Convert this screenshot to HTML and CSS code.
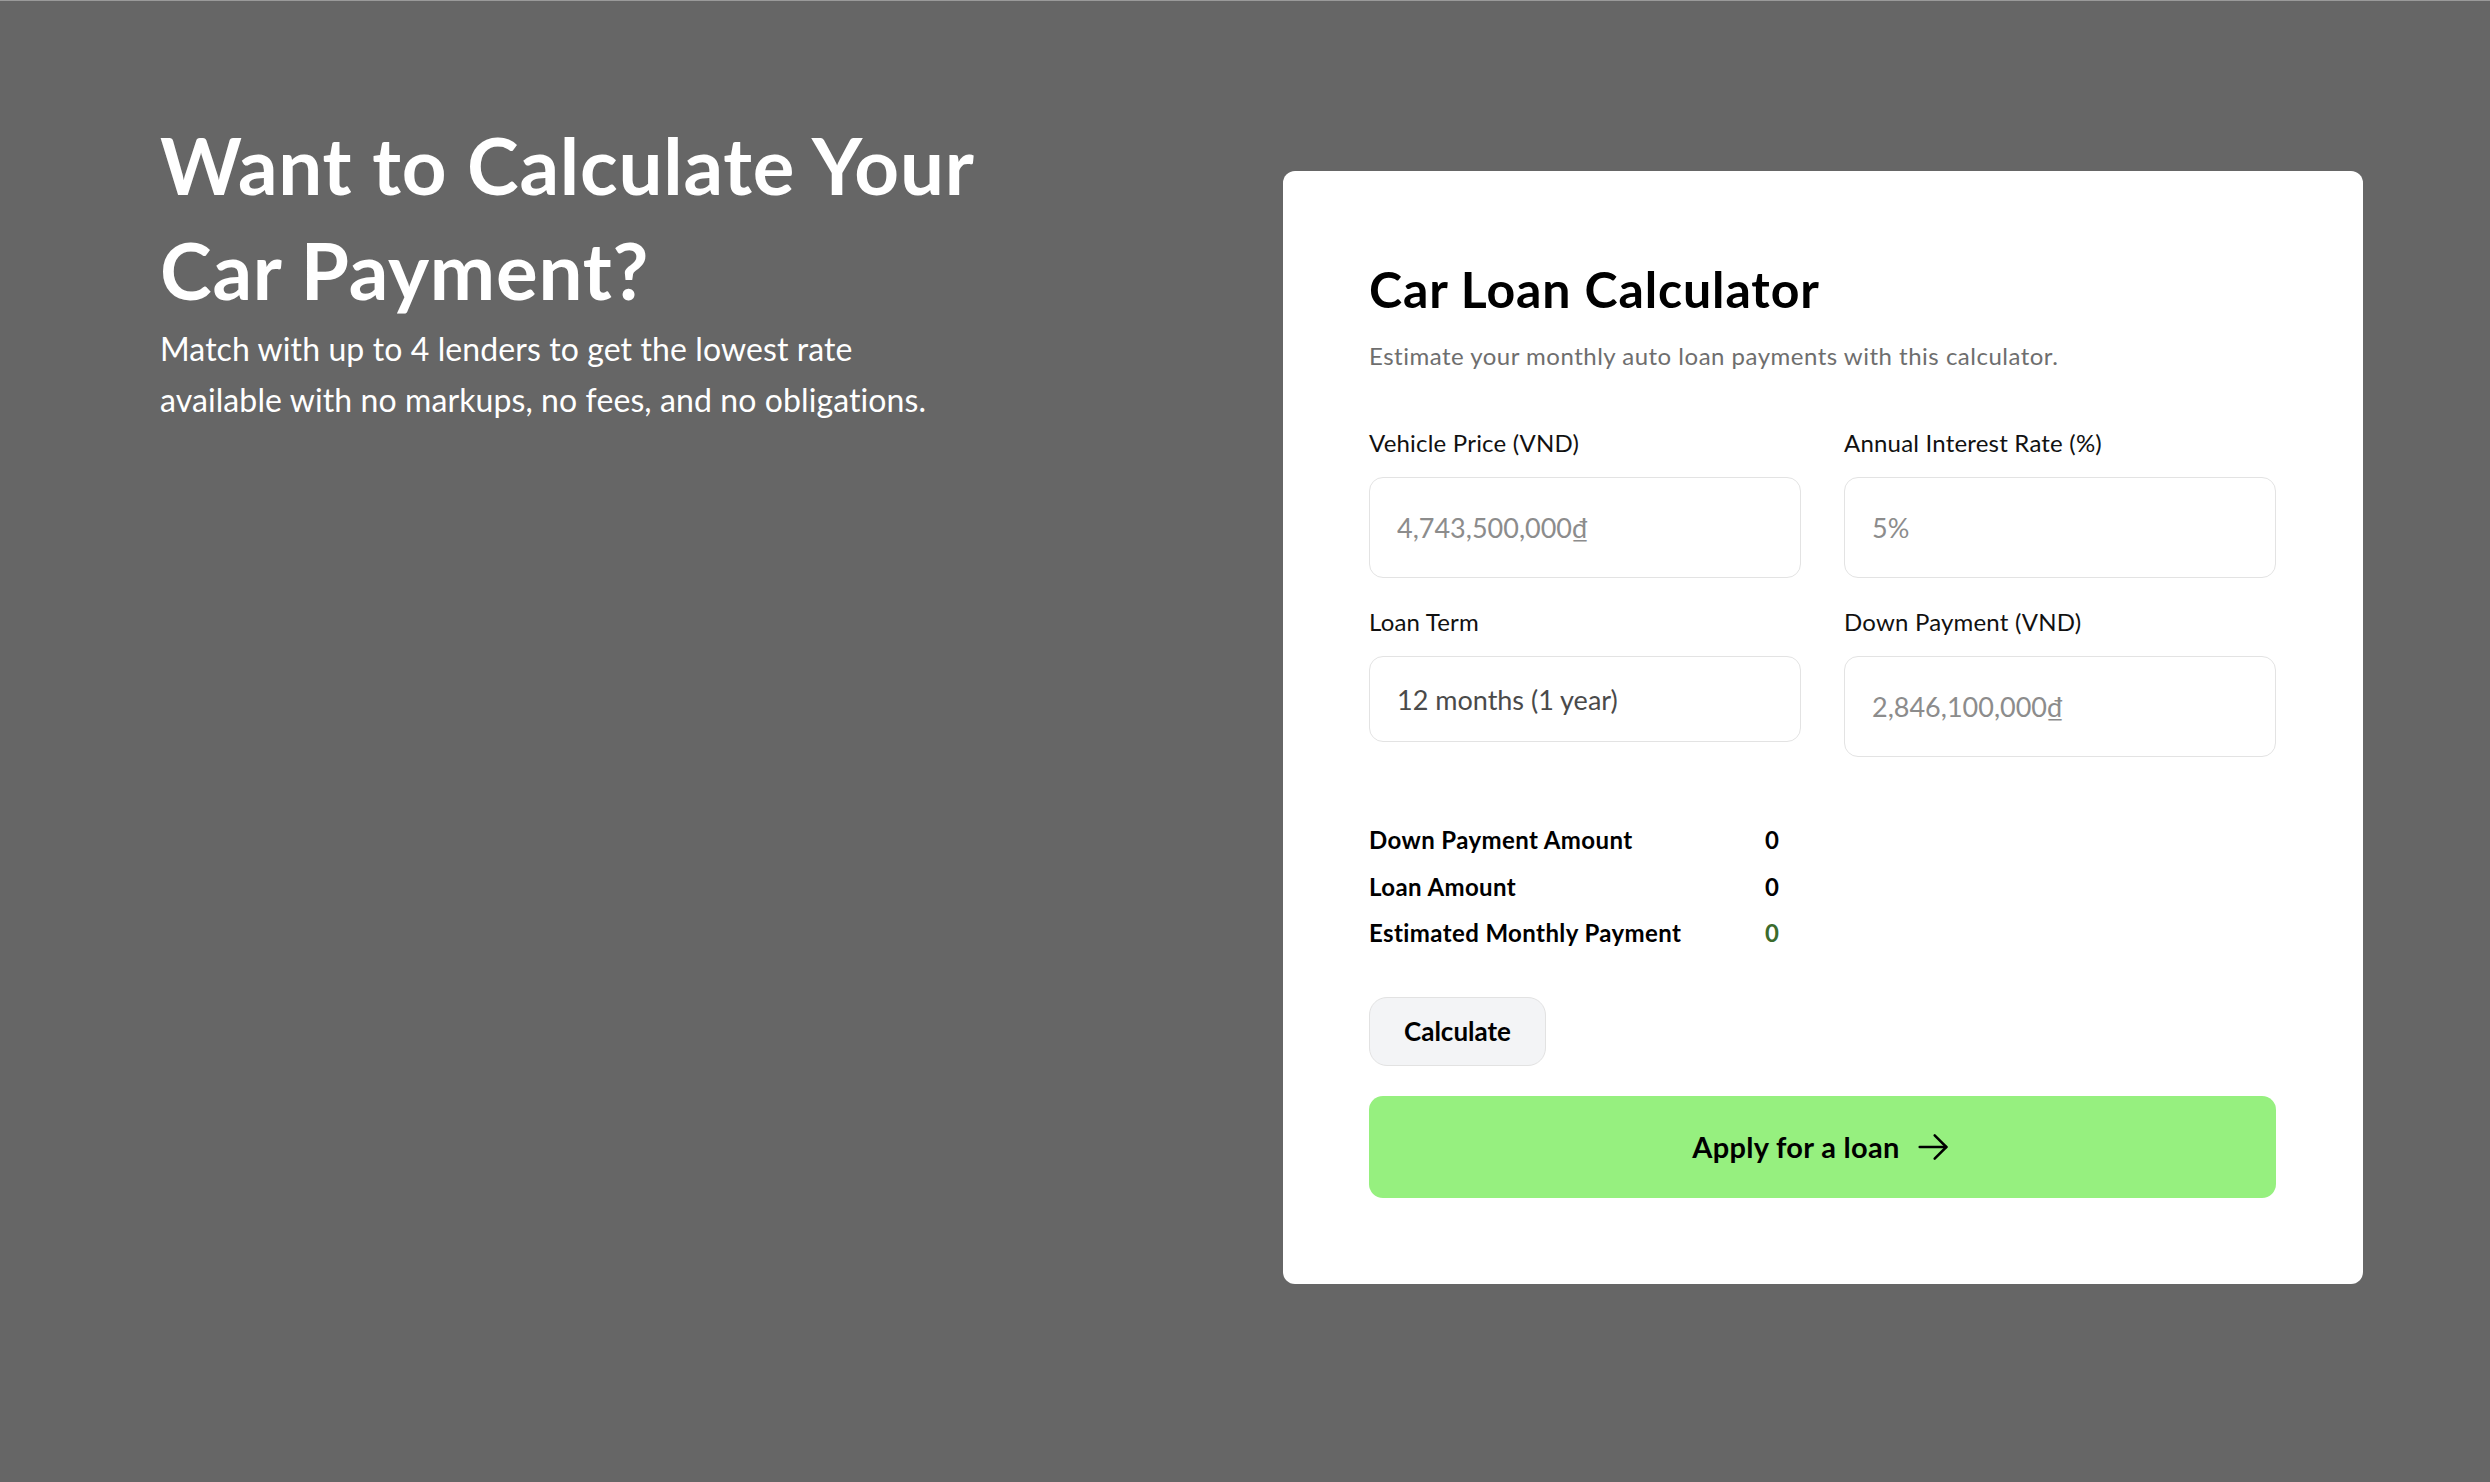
FILE: index.html
```html
<!DOCTYPE html>
<html lang="en">
<head>
<meta charset="utf-8">
<title>Car Loan Calculator</title>
<link rel="stylesheet" href="styles.css">
</head>
<body>
<main class="page">
  <section class="intro">
    <h1 class="intro-title">Want to Calculate Your Car Payment?</h1>
    <p class="intro-text">Match with up to 4 lenders to get the lowest rate available with no markups, no fees, and no obligations.</p>
  </section>
  <section class="card">
    <h2 class="card-title">Car Loan Calculator</h2>
    <p class="card-sub">Estimate your monthly auto loan payments with this calculator.</p>
    <div class="fields">
      <div class="field">
        <label class="field-label" for="price">Vehicle Price (VND)</label>
        <input class="field-input" id="price" type="text" placeholder="4,743,500,000₫">
      </div>
      <div class="field">
        <label class="field-label" for="rate">Annual Interest Rate (%)</label>
        <input class="field-input" id="rate" type="text" placeholder="5%">
      </div>
      <div class="field">
        <label class="field-label" for="term">Loan Term</label>
        <select class="field-select" id="term">
          <option>12 months (1 year)</option>
          <option>24 months (2 years)</option>
          <option>36 months (3 years)</option>
        </select>
      </div>
      <div class="field">
        <label class="field-label" for="down">Down Payment (VND)</label>
        <input class="field-input" id="down" type="text" placeholder="2,846,100,000₫">
      </div>
    </div>
    <dl class="results">
      <dt>Down Payment Amount</dt><dd>0</dd>
      <dt>Loan Amount</dt><dd>0</dd>
      <dt>Estimated Monthly Payment</dt><dd class="green">0</dd>
    </dl>
    <div class="actions">
      <button class="btn-calc" type="button">Calculate</button>
    </div>
    <button class="btn-apply" type="button">
      <span>Apply for a loan</span>
      <svg class="arrow" width="40" height="40" viewBox="0 0 24 24" fill="none" stroke="#000" stroke-width="1.5" stroke-linecap="round" stroke-linejoin="round"><path d="M4 12h16"/><path d="M13 5l7 7-7 7"/></svg>
    </button>
  </section>
</main>
</body>
</html>
```

FILE: styles.css
```css
* { box-sizing: border-box; }

html, body {
  margin: 0;
  padding: 0;
}

body {
  background: #666666;
  border-top: 1px solid #9a9a9a;
  font-family: Lato, "Noto Sans", sans-serif;
  min-height: 1482px;
}

.page {
  display: flex;
  justify-content: space-between;
  align-items: flex-start;
  padding: 0 127px 0 160px;
}

.intro {
  margin-top: 112px;
  width: 900px;
  color: #ffffff;
}

.intro-title {
  margin: 0;
  font-size: 78px;
  line-height: 105px;
  font-weight: 700;
  letter-spacing: 0.8px;
  width: 880px;
}

.intro-text {
  margin: 0;
  font-size: 32px;
  line-height: 51px;
  font-weight: 400;
  letter-spacing: 0.1px;
  width: 820px;
}

.card {
  margin-top: 170px;
  width: 1080px;
  background: #ffffff;
  border-radius: 12px;
  padding: 90px 87px 86px 86px;
  display: flex;
  flex-direction: column;
}

.card-title {
  margin: 0;
  font-size: 50px;
  line-height: 56px;
  font-weight: 700;
  letter-spacing: 0.9px;
  color: #000;
}

.card-sub {
  margin: 22px 0 0;
  font-size: 24px;
  line-height: 34px;
  letter-spacing: 0.5px;
  color: #6e6e6e;
}

.fields {
  margin-top: 52px;
  display: grid;
  grid-template-columns: 1fr 1fr;
  column-gap: 43px;
  row-gap: 26px;
  align-items: start;
}

.field {
  display: flex;
  flex-direction: column;
  gap: 16px;
}

.field-label {
  font-size: 24px;
  line-height: 36px;
  letter-spacing: 0.2px;
  color: #111;
}

.field-input,
.field-select {
  font-family: Lato, "Noto Sans", sans-serif;
  font-size: 27px;
  border: 1px solid #e3e3e3;
  border-radius: 14px;
  background: #fff;
  padding: 0 27px;
  width: 100%;
  outline: none;
}

.field-input {
  height: 101px;
  color: #333;
}

.field-input::placeholder {
  color: #8c8c8c;
}

.field-select {
  height: 86px;
  color: #4a4a4a;
  appearance: none;
  -webkit-appearance: none;
}

.results {
  margin: 60px 0 0;
  display: grid;
  grid-template-columns: 396px auto;
  justify-content: start;
  font-size: 24px;
  line-height: 46.5px;
  font-weight: 700;
  letter-spacing: 0.4px;
  color: #000;
}

.results dt,
.results dd {
  margin: 0;
}

.results .green {
  color: #3b6b2c;
}

.actions {
  margin-top: 40px;
  display: flex;
}

.btn-calc {
  height: 69px;
  padding: 0 34px;
  background: #f3f4f6;
  border: 1px solid #e2e2e2;
  border-radius: 18px;
  font-family: Lato, "Noto Sans", sans-serif;
  font-size: 26px;
  font-weight: 700;
  color: #000;
}

.btn-apply {
  margin-top: 30px;
  height: 102px;
  width: 100%;
  background: #96f07f;
  border: none;
  border-radius: 14px;
  display: flex;
  align-items: center;
  justify-content: center;
  gap: 13px;
  font-family: Lato, "Noto Sans", sans-serif;
  font-size: 29px;
  font-weight: 700;
  letter-spacing: 0.3px;
  color: #000;
}

.arrow {
  display: block;
}
```
